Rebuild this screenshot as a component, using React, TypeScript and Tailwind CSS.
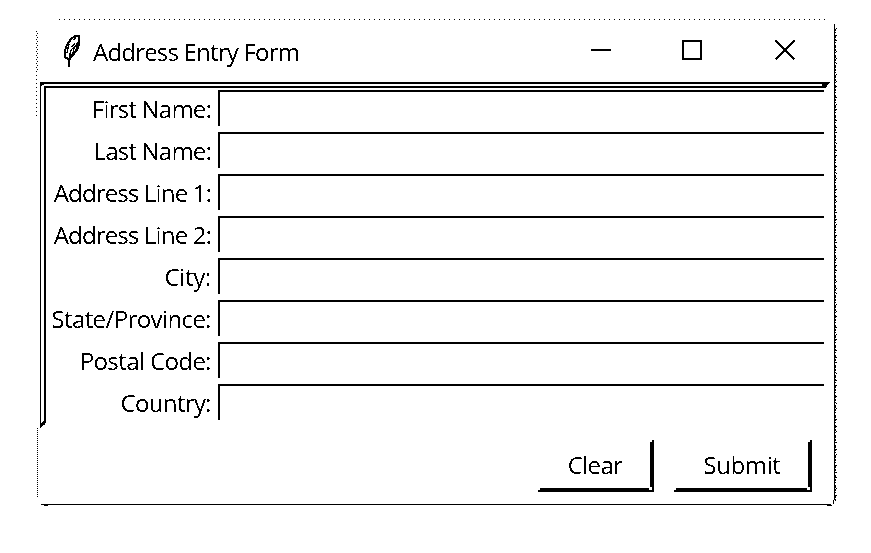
const labels: [string, string][] = [
  ['First Name:', 'tracking-[-0.8px]'],
  ['Last Name:', 'tracking-[-0.8px]'],
  ['Address Line 1:', 'tracking-[-0.85px]'],
  ['Address Line 2:', 'tracking-[-0.85px]'],
  ['City:', 'tracking-[-0.3px]'],
  ['State/Province:', 'tracking-[-0.6px]'],
  ['Postal Code:', 'tracking-[-0.6px]'],
  ['Country:', 'tracking-[-0.65px]'],
];

function Feather() {
  return (
    <svg className="mt-[35px] ml-[27px] h-8 w-[18px]" viewBox="0 0 18 32" fill="none" stroke="black" shapeRendering="crispEdges">
      <path d="M6 32V23" strokeWidth="2" />
      <path d="M5 24L2 22L2 15L4 10L8 4L12 1L16 1V9L14 15L10 20L6 25" strokeWidth="2" />
      <path d="M17 5V10L15 12V16L12 17L10 21L6 26V19L8 14L12 11L14 7Z" fill="black" stroke="none" />
      <path d="M13 3L10 5M6 9L5 13L4 18M12 8L9 12" strokeWidth="1.4" />
      <path d="M10 14L8 19M13 12L11 16" stroke="white" strokeWidth="1" />
    </svg>
  );
}

function Sides() {
  return (
    <svg className="pointer-events-none absolute inset-0" width="871" height="553" shapeRendering="crispEdges" stroke="black" fill="none">
      <path d="M59 19.5H825" strokeDasharray="1 4" />
      <path d="M36.5 31V116" strokeDasharray="1 3" />
      <path d="M37.5 33V72" strokeDasharray="1 3" />
      <path d="M37.5 428V497" strokeDasharray="1 1" />
      <path d="M834.5 24V500" />
      <path d="M835.5 29V501" strokeDasharray="2 1 1 2 3 1" />
      <path d="M836.5 28V500" strokeDasharray="1 6 1 4 1 10" />
      <path d="M41 504.5H831" />
      <path d="M44 505.5H48M827 505.5H832M833.5 500V504" />
      <path d="M40 82H830V83H829V84H828V85H827V87H826V88H46V423H45V425H43V426H42V427H41V428H40Z" fill="black" stroke="none" />
      <path d="M44 84H822V86H44V421H43V422H42V423H41V86H42V85H44Z" fill="white" stroke="none" />
    </svg>
  );
}

function Bevel() {
  return (
    <span className="pointer-events-none absolute inset-0">
      <span className="absolute top-0 right-[-2px] h-[2px] w-[2px] bg-white" />
      <span className="absolute right-[-2px] bottom-[-2px] h-[3px] w-[3px] bg-white" />
      <span className="absolute bottom-[-2px] left-0 h-[2px] w-[2px] bg-white" />
    </span>
  );
}

export default function App() {
  return (
    <div className="relative h-[553px] w-[871px] overflow-hidden bg-white font-['Open_Sans',sans-serif] text-2xl leading-8 text-black">
      <svg width="0" height="0" className="absolute">
        <filter id="crisp" x="0" y="0" width="1" height="1">
          <feComponentTransfer><feFuncA type="discrete" tableValues="0 1" /></feComponentTransfer>
        </filter>
      </svg>
      <Sides />
      <header className="flex h-[90px] pl-9">
        <Feather />
        <h1 className="mt-9 ml-3 w-[480px] tracking-[-0.8px] [filter:url(#crisp)]">Address Entry Form</h1>
        <svg className="mt-[38px] ml-[18px]" width="206" height="24" stroke="black" strokeWidth="2" fill="none" shapeRendering="crispEdges">
          <path d="M0 12H20M92 3H110V21H92Z" />
          <path d="M184.500 2.500L203.500 21.500M203.500 2.500L184.500 21.500" />
        </svg>
      </header>
      <main>
        {labels.map(([label, tracking]) => (
          <label key={label} className="flex h-[42px] pl-[46px]">
            <span className={`mt-[3px] mr-[7px] h-8 w-[165px] text-right whitespace-nowrap [filter:url(#crisp)] ${tracking}`}>{label}</span>
            <input className="h-9 w-[606px] border-t-2 border-l-2 border-black bg-white outline-none" />
          </label>
        ))}
      </main>
      <footer className="flex gap-5 pt-[14px] pl-[538px]">
        <button className="relative h-[52px] w-[116px] border-r-4 border-b-4 border-black pt-[2px] pl-[2px]">
          <span className="block tracking-[-0.7px] [filter:url(#crisp)]">Clear</span>
          <Bevel />
        </button>
        <button className="relative h-[52px] w-[138px] border-r-4 border-b-4 border-black pt-[2px] pl-[2px]">
          <span className="block tracking-[-0.4px] [filter:url(#crisp)]">Submit</span>
          <Bevel />
        </button>
      </footer>
    </div>
  );
}
